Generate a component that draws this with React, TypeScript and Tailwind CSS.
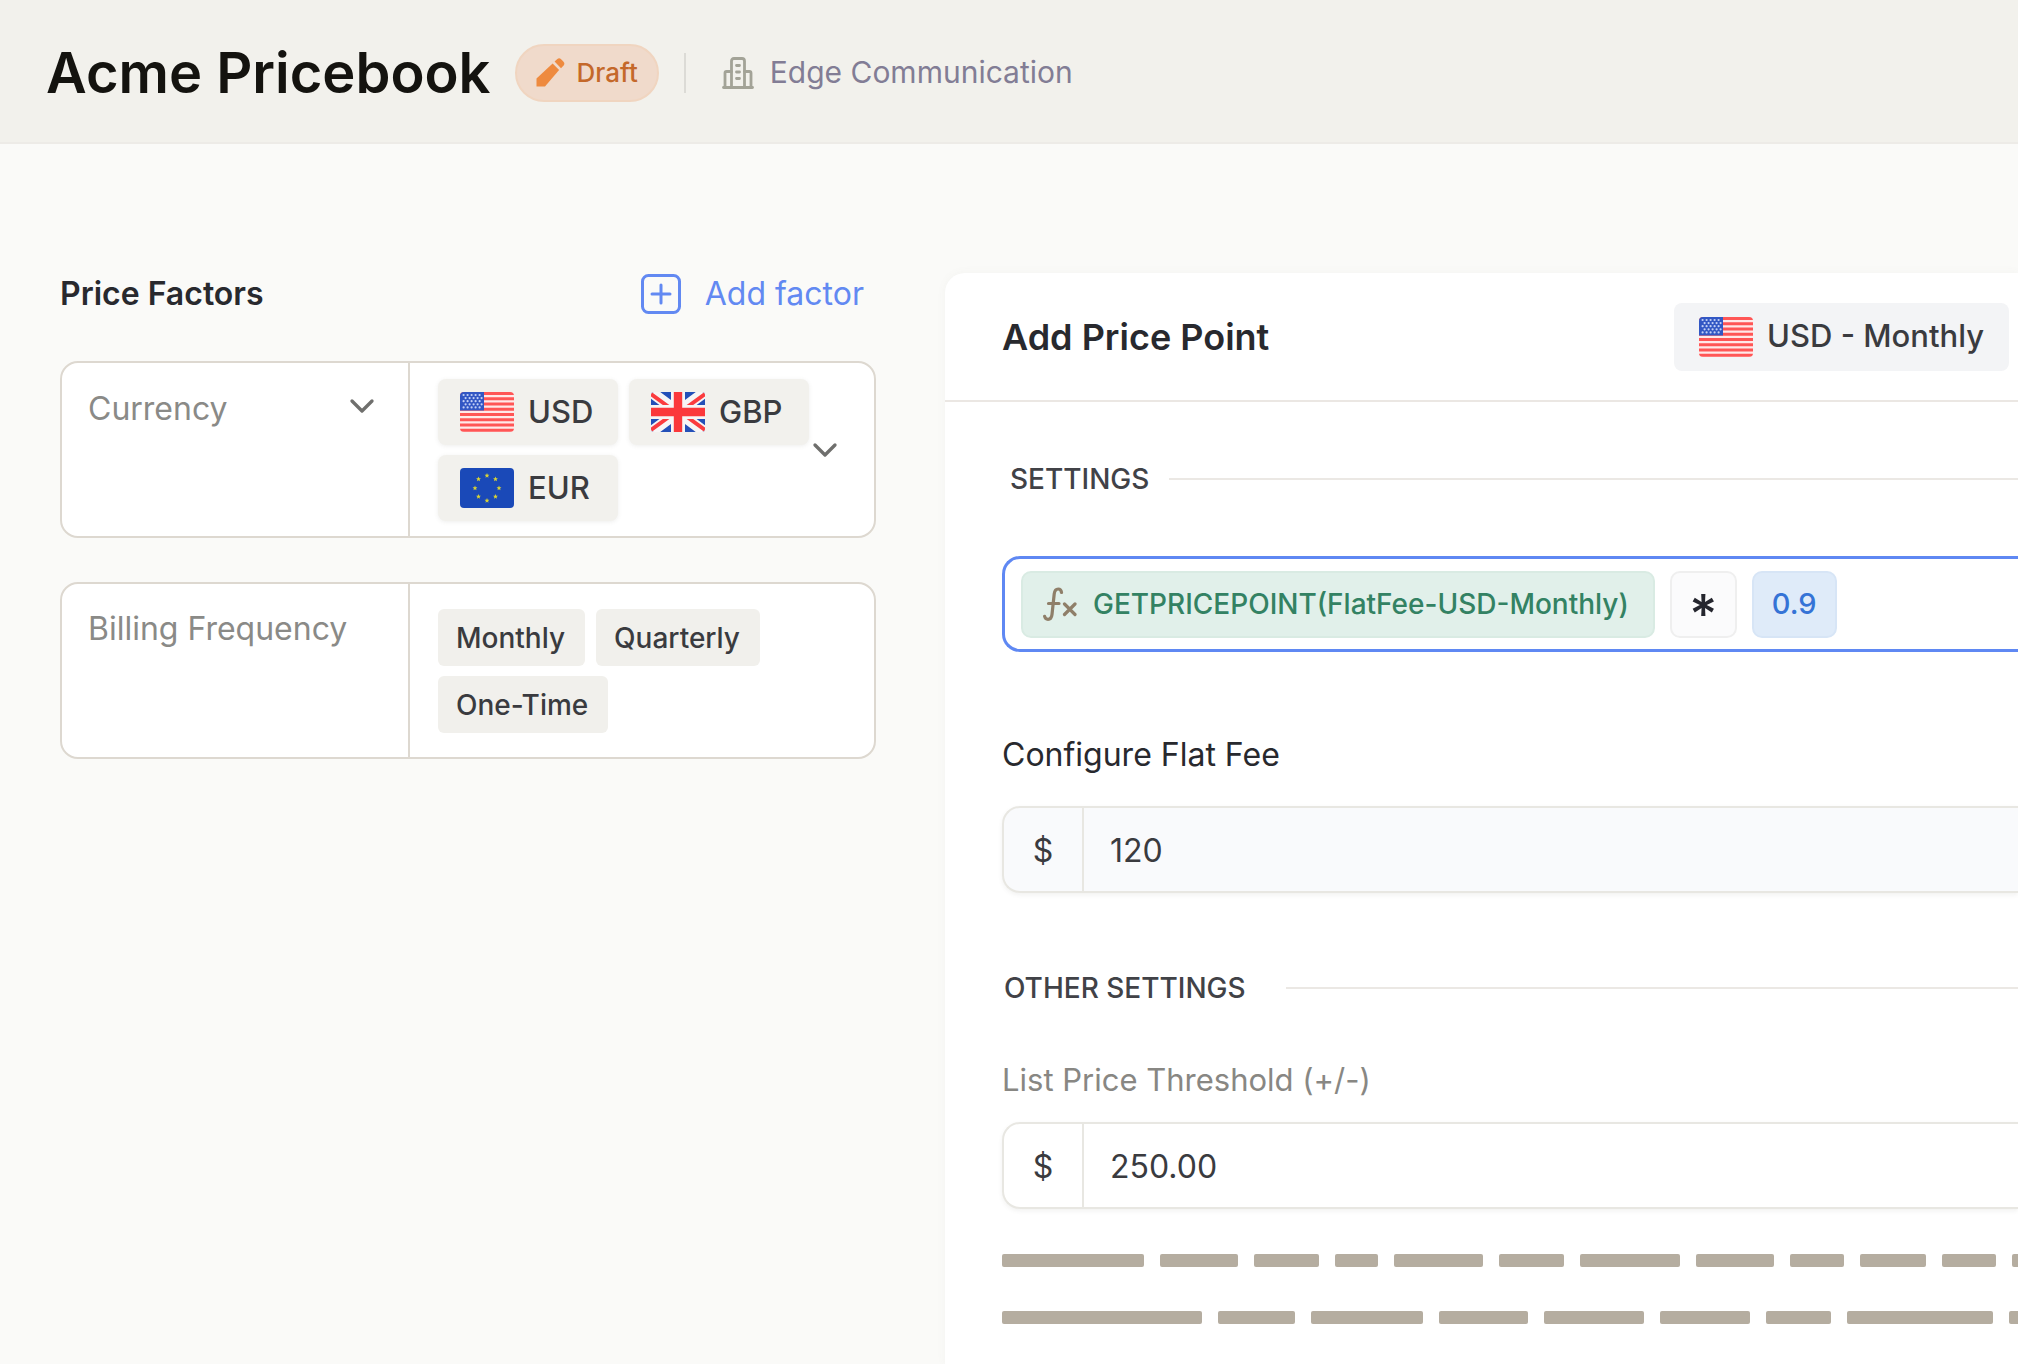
import { useState } from 'react';
import type { ReactNode } from 'react';
import { ChevronDown } from 'lucide-react';

function UsFlag() {
  return (
    <svg viewBox="0 0 54 40" className="h-10 w-[54px] shrink-0" aria-hidden="true">
      <clipPath id="us-flag">
        <rect width="54" height="40" rx="4" />
      </clipPath>
      <g clipPath="url(#us-flag)">
        <rect width="54" height="40" fill="#ffe9e9" />
        {[0, 1, 2, 3, 4, 5, 6, 7].map((i) => (
          <rect key={i} y={i * 5.25} width="54" height="3" fill="#ff5656" />
        ))}
        <rect width="24" height="18.5" fill="#3257c4" />
        {[0, 1, 2, 3, 4].map((row) =>
          [0, 1, 2, 3, 4].map((col) => (
            <circle
              key={`${row}-${col}`}
              cx={3.6 + col * 4 + (row % 2 ? 2 : 0)}
              cy={3 + row * 3.1}
              r="1.1"
              fill="#c3d0f5"
            />
          )),
        )}
      </g>
    </svg>
  );
}

function UkFlag() {
  return (
    <svg viewBox="0 0 54 40" className="h-10 w-[54px] shrink-0" aria-hidden="true">
      <clipPath id="uk-flag">
        <rect width="54" height="40" rx="3" />
      </clipPath>
      <g clipPath="url(#uk-flag)">
        <rect width="54" height="40" fill="#2450b8" />
        <path d="M0 0 54 40M54 0 0 40" stroke="#f7f5f5" strokeWidth="11" />
        <path d="M0 2 22 18M54 2 32 18M0 38 22 22M54 38 32 22" stroke="#fb3c3f" strokeWidth="4" />
        <path d="M27 0v40M0 20h54" stroke="#f7f5f5" strokeWidth="14" />
        <path d="M27 0v40M0 20h54" stroke="#fb383b" strokeWidth="8.4" />
      </g>
    </svg>
  );
}

const euStars = [
  [27, 7.5],
  [35.5, 11],
  [39, 20],
  [35.5, 28.5],
  [27, 32.5],
  [18.5, 28.5],
  [15, 20],
  [18.5, 11],
];

function EuFlag() {
  return (
    <svg viewBox="0 0 54 40" className="h-10 w-[54px] shrink-0" aria-hidden="true">
      <rect width="54" height="40" rx="4" fill="#1a49b8" />
      {euStars.map(([x, y]) => (
        <path
          key={`${x}-${y}`}
          transform={`translate(${x} ${y})`}
          d="M0-2.4.7-.8 2.4-.7 1.1.5 1.5 2.2 0 1.3-1.5 2.2-1.1.5-2.4-.7-.7-.8Z"
          fill="#d8d336"
        />
      ))}
    </svg>
  );
}

function PencilIcon() {
  return (
    <svg viewBox="0 0 29 29" className="size-[29px] shrink-0" fill="#ee8a3f" aria-hidden="true">
      <path d="M.5 28.5v-8L16.6 5.4l6.5 6.6L9 28.5Z" />
      <path d="M18.6 3.6 21.4 1q1.8-1.6 3.5.1l2.6 2.7q1.7 1.8.1 3.6l-2.6 2.9Z" />
    </svg>
  );
}

function BuildingIcon() {
  return (
    <svg
      viewBox="0 0 32 32"
      className="size-8 shrink-0"
      fill="none"
      stroke="#a3a397"
      strokeWidth="2.8"
      strokeLinejoin="round"
      strokeLinecap="round"
      aria-hidden="true"
    >
      <path d="M1.500 30.500h29" />
      <path d="M9.500 30V4q0-2.500 2.500-2.500h8q2.500 0 2.500 2.500v26" />
      <path d="M3 30V16q0-1.500 1.500-1.500h5M29 30V16q0-1.500-1.500-1.500h-5" />
      <path d="M14.500 8.500h3M14.500 15h3M14.500 21.500h3" />
    </svg>
  );
}

function FunctionIcon() {
  return (
    <svg
      viewBox="0 0 34 34"
      className="size-[34px] shrink-0"
      fill="none"
      stroke="#8f7f69"
      strokeWidth="3.200"
      strokeLinecap="round"
      strokeLinejoin="round"
      aria-hidden="true"
    >
      <path d="M18.500 5.500q-.4-3.500-3.300-3.500-3.400 0-4 5L9 27.500q-.6 4.800-4 4.800-2.800 0-3.400-3M5.500 16.500h10.500" />
      <path d="m21.500 17 10.500 10.500M32 17 21.500 27.500" />
    </svg>
  );
}

function AddBoxIcon() {
  return (
    <svg viewBox="0 0 40 40" className="size-10 shrink-0" fill="none" stroke="#6289f2" strokeWidth="3" strokeLinecap="round" aria-hidden="true">
      <rect x="1.500" y="1.500" width="37" height="37" rx="6" />
      <path d="M20 11v18M11 20h18" />
    </svg>
  );
}

function CurrencyChip({ flag, code }: { flag: ReactNode; code: string }) {
  return (
    <span className="flex h-[66px] w-[180px] items-center gap-[14px] rounded-lg bg-[#f2f1ed] px-[22px] text-[31px] font-medium text-[#3a3b3f] shadow-[0_1px_4px_rgba(90,90,80,0.1)]">
      {flag}
      <span className="pt-0.5">{code}</span>
    </span>
  );
}

function FrequencyChip({ children }: { children: ReactNode }) {
  return (
    <span className="flex h-[57px] items-center rounded-md bg-[#f1f0ec] pt-0.5 pr-5 pl-[18px] text-[28px] font-medium text-[#3a3b3f]">
      {children}
    </span>
  );
}

function SectionHeading({ children, gap }: { children: ReactNode; gap: 'small' | 'large' }) {
  return (
    <div className={gap === 'small' ? 'flex items-center gap-5 pl-2' : 'flex items-center gap-10 pl-0.5'}>
      <h3 className="text-[28px] leading-8 font-medium text-[#414247]">{children}</h3>
      <div className="h-0.5 flex-1 bg-[#ebe8e4]" />
    </div>
  );
}

function MoneyField({ id, value, onChange, tinted }: { id: string; value: string; onChange: (v: string) => void; tinted?: boolean }) {
  return (
    <div
      className={`flex h-[87px] items-stretch overflow-hidden rounded-l-[18px] border-2 border-r-0 border-[#e8e7e2] text-[32px] text-[#3a3b3f] shadow-[0_2px_4px_rgba(90,90,80,0.08)] ${
        tinted ? 'bg-[#f9fafc]' : 'bg-white'
      }`}
    >
      <span className="flex w-20 shrink-0 items-center justify-center border-r-2 border-[#e8e7e2] pt-0.5">$</span>
      <input
        id={id}
        type="text"
        inputMode="decimal"
        value={value}
        onChange={(e) => onChange(e.target.value)}
        className="min-w-0 flex-1 bg-transparent px-[26px] pt-0.5 outline-none"
      />
    </div>
  );
}

function BarRow({ children }: { children: ReactNode }) {
  return <div className="flex h-[13px] gap-4 overflow-hidden">{children}</div>;
}

const bar = 'h-full shrink-0 rounded-[2px] bg-[#b5ada0]';

export default function App() {
  const [flatFee, setFlatFee] = useState('120');
  const [threshold, setThreshold] = useState('250.00');

  return (
    <div className="flex min-h-screen flex-col overflow-hidden bg-[#fafaf8] font-['Inter',sans-serif] text-[#28292e]">
      <header className="flex h-36 items-center border-b-2 border-[#edebe7] bg-[#f2f1ec] pt-[3px] pl-[46px]">
        <h1 className="text-[56px] font-semibold text-[#14130f]">Acme Pricebook</h1>
        <span className="ml-[25px] flex h-[58px] items-center gap-[11px] rounded-full border-2 border-[#f0d5c0] bg-[#f0dacb] px-[19px] text-[26px] font-medium text-[#c4682a]">
          <PencilIcon />
          Draft
        </span>
        <div className="ml-[25px] h-10 w-0.5 bg-[#dcdbd6]" />
        <span className="ml-9 flex items-center gap-4 text-[30px] text-[#827d95]">
          <BuildingIcon />
          Edge Communication
        </span>
      </header>

      <main className="grid flex-1 grid-cols-[945px_minmax(0,1fr)]">
        <aside className="flex flex-col pt-[130px] pr-[69px] pl-[60px]">
          <div className="flex h-10 items-center justify-between pr-3">
            <h2 className="text-[32px] font-semibold">Price Factors</h2>
            <button type="button" className="flex items-center gap-6 text-[32px] text-[#6289f2]">
              <AddBoxIcon />
              Add factor
            </button>
          </div>

          <div className="mt-[47px] flex h-[177px] rounded-[18px] border-2 border-[#ddd8d0] bg-white">
            <div className="relative w-[348px] shrink-0 border-r-2 border-[#ddd8d0]">
              <select
                aria-label="Price factor"
                className="h-[92px] w-full appearance-none bg-transparent pl-[26px] text-[32px] text-[#8a8a87] outline-none"
              >
                <option>Currency</option>
              </select>
              <ChevronDown className="pointer-events-none absolute top-[23px] right-[26px] size-10 text-[#6f6f6d]" strokeWidth={2} />
            </div>
            <div className="flex min-w-0 flex-1 items-center pl-[28px]">
              <div className="flex w-[371px] flex-wrap gap-x-[11px] gap-y-2.5">
                <CurrencyChip flag={<UsFlag />} code="USD" />
                <CurrencyChip flag={<UkFlag />} code="GBP" />
                <CurrencyChip flag={<EuFlag />} code="EUR" />
              </div>
              <button type="button" aria-label="Show currencies" className="-ml-1 text-[#6f6f6d]">
                <ChevronDown className="size-10" strokeWidth={2} />
              </button>
            </div>
          </div>

          <div className="mt-11 flex h-[177px] rounded-[18px] border-2 border-[#ddd8d0] bg-white">
            <div className="w-[348px] shrink-0 border-r-2 border-[#ddd8d0] pt-[21px] pl-[26px] text-[32px] text-[#8a8a87]">
              Billing Frequency
            </div>
            <div className="flex min-w-0 flex-1 flex-wrap content-center gap-x-[11px] gap-y-2.5 pr-20 pl-[28px]">
              <FrequencyChip>Monthly</FrequencyChip>
              <FrequencyChip>Quarterly</FrequencyChip>
              <FrequencyChip>One-Time</FrequencyChip>
            </div>
          </div>
        </aside>

        <section className="mt-[129px] flex flex-col rounded-tl-[20px] bg-white shadow-[0_0_10px_rgba(120,120,100,0.05)]">
          <div className="flex h-[129px] items-center justify-between border-b-2 border-[#ebe7e3] pr-[9px] pl-[57px]">
            <h2 className="text-[36px] font-semibold">Add Price Point</h2>
            <span className="flex h-[68px] items-center gap-[14px] rounded-lg bg-[#f3f4f6] px-[25px] text-[31px] font-medium text-[#3a3b3f]">
              <UsFlag />
              USD - Monthly
            </span>
          </div>

          <div className="flex flex-col pt-[61px] pl-[57px]">
            <SectionHeading gap="small">SETTINGS</SectionHeading>

            <div className="mt-[61px] flex h-24 items-center gap-[15px] rounded-l-[18px] border-[3px] border-r-0 border-[#5f88f3] bg-white pl-4">
              <span className="flex h-[67px] items-center gap-4 rounded-[10px] border-2 border-[#d9ebe3] bg-[#e1f0ea] pr-6 pl-5 text-[28px] font-medium text-[#338263]">
                <FunctionIcon />
                GETPRICEPOINT(FlatFee-USD-Monthly)
              </span>
              <span className="flex h-[67px] w-[67px] items-center justify-center rounded-[10px] border-2 border-[#efefef] bg-[#fbfbfc] pt-[18px] text-[54px] font-medium text-[#25262e]">
                *
              </span>
              <span className="flex h-[67px] items-center rounded-[10px] border-2 border-[#d7e5f6] bg-[#dfebf9] px-[18px] text-[29px] font-medium text-[#3573d6]">
                0.9
              </span>
            </div>

            <label htmlFor="flat-fee" className="mt-[83px] text-[32px] leading-10">
              Configure Flat Fee
            </label>
            <div className="mt-[31px]">
              <MoneyField id="flat-fee" value={flatFee} onChange={setFlatFee} tinted />
            </div>

            <div className="mt-[79px]">
              <SectionHeading gap="large">OTHER SETTINGS</SectionHeading>
            </div>

            <label htmlFor="threshold" className="mt-14 text-[31px] leading-10 text-[#888783]">
              List Price Threshold (+/-)
            </label>
            <div className="mt-[22px]">
              <MoneyField id="threshold" value={threshold} onChange={setThreshold} />
            </div>

            <div className="mt-[45px] flex flex-col gap-11 pb-10">
              <BarRow>
                <div className={`${bar} w-[142px]`} />
                <div className={`${bar} w-[78px]`} />
                <div className={`${bar} w-[65px]`} />
                <div className={`${bar} w-[43px]`} />
                <div className={`${bar} w-[89px]`} />
                <div className={`${bar} w-[65px]`} />
                <div className={`${bar} w-[100px]`} />
                <div className={`${bar} w-[78px]`} />
                <div className={`${bar} w-[54px]`} />
                <div className={`${bar} w-[66px]`} />
                <div className={`${bar} w-[54px]`} />
                <div className={`${bar} w-[88px]`} />
              </BarRow>
              <BarRow>
                <div className={`${bar} w-[200px]`} />
                <div className={`${bar} w-[77px]`} />
                <div className={`${bar} w-[112px]`} />
                <div className={`${bar} w-[89px]`} />
                <div className={`${bar} w-[100px]`} />
                <div className={`${bar} w-[90px]`} />
                <div className={`${bar} w-[65px]`} />
                <div className={`${bar} w-[146px]`} />
                <div className={`${bar} w-[88px]`} />
              </BarRow>
            </div>
          </div>
        </section>
      </main>
    </div>
  );
}
